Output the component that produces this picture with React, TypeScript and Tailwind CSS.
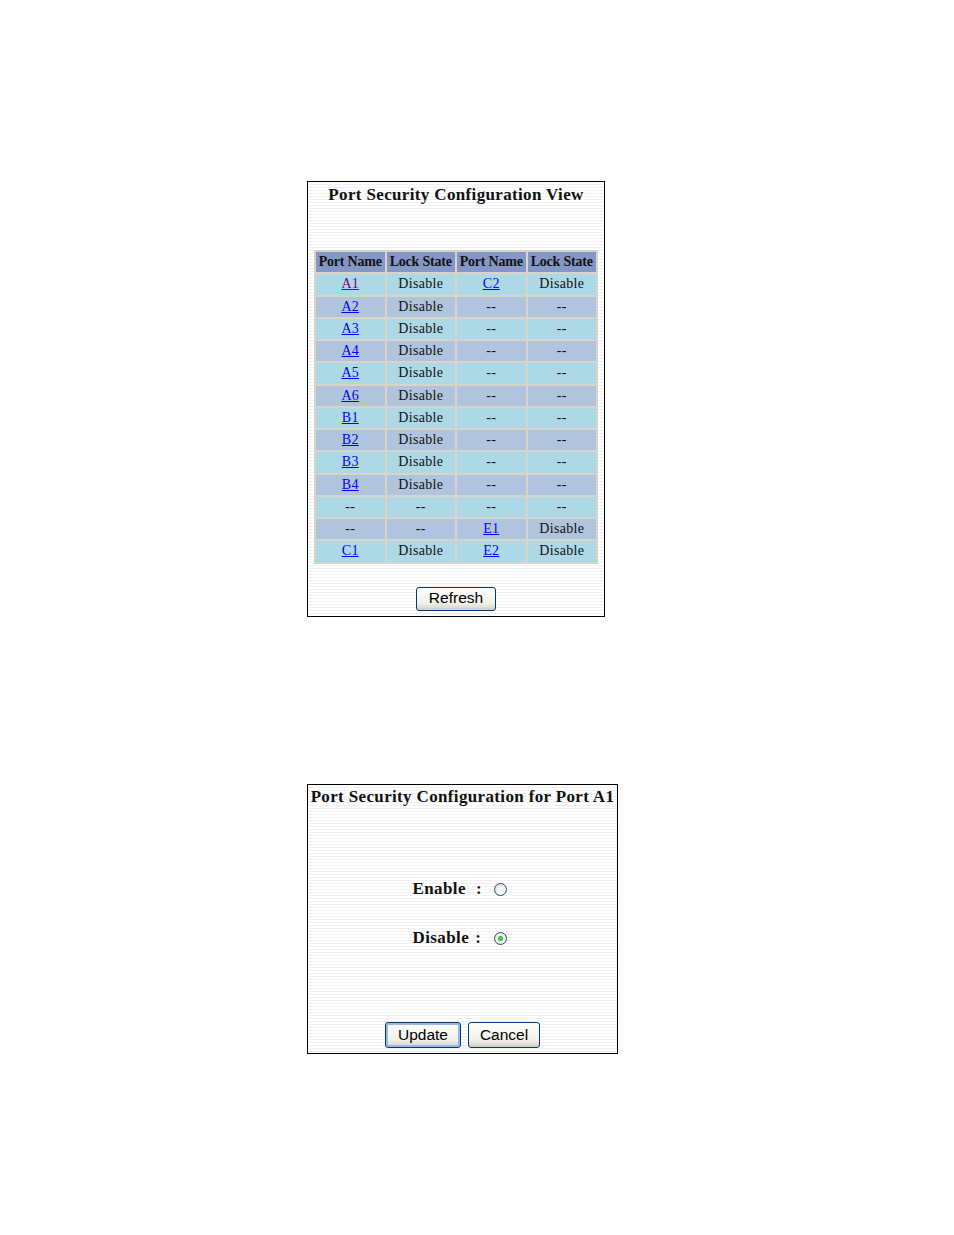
import React from 'react';

const stripes =
  'bg-[repeating-linear-gradient(to_bottom,#ffffff_0px,#ffffff_2px,#f1f1f1_2px,#f1f1f1_3px)]';

type Cell = { text: string; link?: boolean; visited?: boolean };

const l = (text: string, visited = false): Cell => ({ text, link: true, visited });
const t = (text: string): Cell => ({ text });
const d = t('--');
const dis = t('Disable');

const rows: Cell[][] = [
  [l('A1', true), dis, l('C2'), dis],
  [l('A2'), dis, d, d],
  [l('A3'), dis, d, d],
  [l('A4'), dis, d, d],
  [l('A5'), dis, d, d],
  [l('A6'), dis, d, d],
  [l('B1'), dis, d, d],
  [l('B2'), dis, d, d],
  [l('B3'), dis, d, d],
  [l('B4'), dis, d, d],
  [d, d, d, d],
  [d, d, l('E1'), dis],
  [l('C1'), dis, l('E2'), dis],
];

function XPButton({ label, focused, className }: { label: string; focused?: boolean; className: string }) {
  return (
    <button
      className={`rounded-[3px] border border-[#003c74] bg-[linear-gradient(to_bottom,#ffffff,#f0f0ea_70%,#d6d0c5)] pb-[1px] text-[15.5px] text-[#000] font-['Liberation_Sans',Arial,sans-serif] leading-none ${
        focused ? 'shadow-[inset_0_0_0_2px_#98b8ea]' : 'shadow-[inset_0_-2px_0_#d6d0c5]'
      } ${className}`}
    >
      {label}
    </button>
  );
}

function Radio({ checked }: { checked?: boolean }) {
  return (
    <span className="inline-flex h-[13px] w-[13px] items-center justify-center rounded-full border border-[#1c5180] bg-[radial-gradient(circle_at_65%_65%,#ffffff,#dcdcd6)]">
      {checked && <span className="h-[5px] w-[5px] rounded-full bg-[radial-gradient(circle,#4fe04f,#21a121)]" />}
    </span>
  );
}

export default function App() {
  return (
    <div className="relative h-[1235px] w-[954px] bg-white font-['Liberation_Serif','Times_New_Roman',serif] text-[#111]">
      <div className="flex flex-col pt-[181px] pl-[307px]">
        {/* config view panel */}
        <div className={`flex h-[436px] w-[298px] flex-col items-center border border-black ${stripes}`}>
          <div className="mt-[3px] text-[17px] font-bold leading-[20px] tracking-[0.35px] whitespace-nowrap">Port Security Configuration View</div>
          <table className="mt-[45px] w-[284px] border-separate border-spacing-[2px] bg-[#d8d4c8] text-[14px] tracking-[0.3px]">
            <thead>
              <tr>
                {['Port Name', 'Lock State', 'Port Name', 'Lock State'].map((h, i) => (
                  <th key={i} className="h-[20.25px] w-[68px] bg-[#8497c8] p-0 text-center font-bold leading-none tracking-[-0.2px] whitespace-nowrap">
                    {h}
                  </th>
                ))}
              </tr>
            </thead>
            <tbody>
              {rows.map((r, ri) => (
                <tr key={ri}>
                  {r.map((c, ci) => (
                    <td
                      key={ci}
                      className={`h-[20.25px] p-0 text-center leading-none ${ri % 2 === 0 ? 'bg-[#add8e6]' : 'bg-[#b0c4de]'}`}
                    >
                      {c.link ? (
                        <a className={`underline ${c.visited ? 'text-[#800080]' : 'text-[#0000ff]'}`} href="#">
                          {c.text}
                        </a>
                      ) : (
                        c.text
                      )}
                    </td>
                  ))}
                </tr>
              ))}
            </tbody>
          </table>
          <XPButton label="Refresh" className="mt-[23px] h-[24px] w-[80px]" />
        </div>

        {/* port A1 panel */}
        <div className={`mt-[167px] flex h-[270px] w-[311px] flex-col items-center border border-black ${stripes}`}>
          <div className="mt-[2px] text-[17px] font-bold leading-[20px] tracking-[0.35px] whitespace-nowrap">Port Security Configuration for Port A1</div>
          <div className="mt-[72px] ml-[-4px] flex w-[96px] flex-col gap-[29px] text-[17px] font-bold leading-[20px] tracking-[0.4px]">
            <div className="flex items-center">
              <span>Enable</span>
              <span className="ml-[10px]">:</span>
              <span className="ml-[12px] flex"><Radio /></span>
            </div>
            <div className="flex items-center">
              <span>Disable</span>
              <span className="ml-[6px]">:</span>
              <span className="ml-[13px] flex"><Radio checked /></span>
            </div>
          </div>
          <div className="mt-auto mb-[5px] flex gap-[7px]">
            <XPButton label="Update" focused className="h-[26px] w-[76px]" />
            <XPButton label="Cancel" className="h-[26px] w-[72px]" />
          </div>
        </div>
      </div>
    </div>
  );
}
